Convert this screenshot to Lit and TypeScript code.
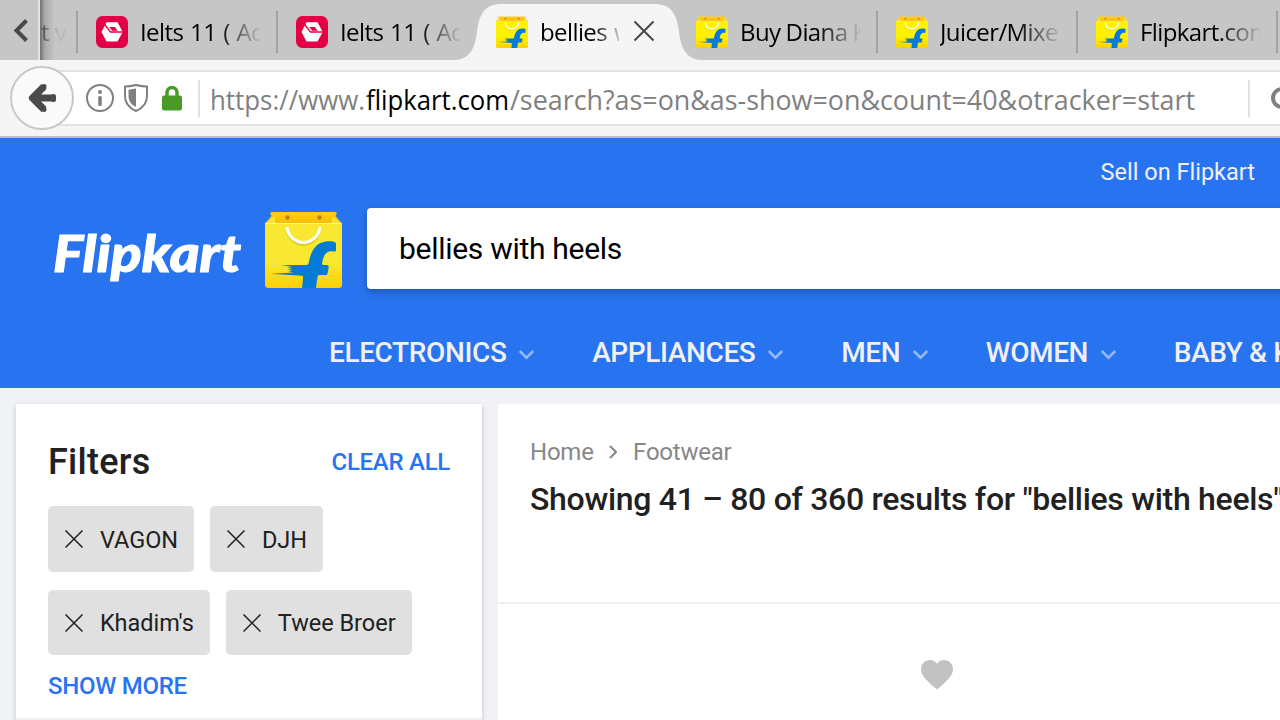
import { LitElement, html, css } from "lit";
import { customElement, property } from "lit/decorators.js";

@customElement("bag-icon")
class BagIcon extends LitElement {
  @property({ type: Boolean }) vivid = false;
  static styles = css`
    :host { display: block; flex: none; }
    svg { display: block; width: 100%; height: 100%; }
  `;
  render() {
    const body = this.vivid ? "#fff200" : "#f8e831";
    const flap = this.vivid ? "#fdb913" : "#fcb908";
    return html`<svg viewBox="0 0 77 77">
      <defs>
        <linearGradient id="b" x1="0" y1="0" x2="0" y2="1">
          <stop offset="0" stop-color=${body} /><stop offset=".6" stop-color=${body} /><stop offset="1" stop-color="#fdcf05" />
        </linearGradient>
        <linearGradient id="t" x1="0" y1="0" x2="0" y2="1">
          <stop offset="0" stop-color="#fdd205" /><stop offset="1" stop-color=${flap} />
        </linearGradient>
      </defs>
      <path d="M0 12h77V73.500q0 3.500-3.500 3.500h-70Q0 77 0 73.500z" fill="url(#b)" />
      <path d="M7 1h63q1.800 0 1.800 1.500L70.500 5 77 12.500H0L6.500 5 5.200 2.500Q5.200 1 7 1z" fill="url(#t)" />
      <path d="M0 12.500L9.500 5l1 7.500zM77 12.500L67.500 5l-1 7.500z" fill="#fae030" />
      <path d="M0 12.500h77" stroke="#fff3a0" stroke-width="1.200" />
      <circle cx="22.500" cy="6.500" r="2.200" fill="#b38600" /><circle cx="54.500" cy="6.500" r="2.200" fill="#b38600" />
      <path d="M22 18c1 9 8 15.500 16.500 15.500S54 27 55 18" fill="none" stroke="#c9b512" stroke-width="2.500" opacity=".6" />
      <path d="M22 16c1 9 8 15.500 16.500 15.500S54 25 55 16" fill="none" stroke="#fff" stroke-width="3" />
      <path d="M71 39.500V33q0-1.700-2-2.300C55 28.500 46.500 35 43.700 52q-.4 2-2.200 2H16l11 1.600-5.500.4 6 1.200-5 .8 5 1.300-4.500.7 5 1.600L6 62.800l31 2q1.300.2 1.100 2.200L37 77h14l1.600-11.500q.2-1.500 1.400-1.500h7q1.200 0 1.500-1.500l1.200-6q.3-2.500-2-2.500h-3.200q-1.700 0-1.400-1.800C58.300 44.500 61 39 69 40.500q2 .3 2-1z" fill="#047bd5" />
    </svg>`;
  }
}

@customElement("browser-tab")
class BrowserTab extends LitElement {
  @property() label = "";
  @property() icon = "bag";
  @property({ type: Boolean, reflect: true }) active = false;
  @property({ type: Boolean, reflect: true }) plain = false;
  static styles = css`
    :host { display: flex; position: relative; box-sizing: border-box; flex: none; width: 200px; height: 60px; padding: 4px 0 0 20px; align-items: center; gap: 12px; }
    .sep { position: absolute; left: 0; top: 11px; width: 2px; height: 42px; background: #a2a2a2; }
    .shape { position: absolute; left: -21px; top: 4px; width: 246px; height: 56px; }
    .icon { position: relative; width: 32px; height: 32px; flex: none; }
    .label { position: relative; width: 120px; height: 36px; overflow: hidden; white-space: nowrap; font: 24px/35px "Open Sans", "Noto Sans", sans-serif; letter-spacing: -0.6px; word-spacing: 1.200px; color: #000;
      -webkit-mask-image: linear-gradient(90deg, #000 78px, transparent 122px); mask-image: linear-gradient(90deg, #000 78px, transparent 122px); }
    :host([active]) .label { width: 79px; -webkit-mask-image: linear-gradient(90deg, #000 54px, transparent 86px); mask-image: linear-gradient(90deg, #000 54px, transparent 86px); }
    :host([plain]) .label { word-spacing: -.5px; }
    .close { position: relative; width: 22px; height: 22px; margin-top: -2px; margin-left: 2px; flex: none; }
  `;
  render() {
    return html`
      ${this.active
        ? html`<svg class="shape" viewBox="0 0 246 56"><path d="M0 56C15 55 20 44 22 28C24 10 30 0 47 0H199C216 0 222 10 224 28C226 44 231 55 246 56z" fill="#f5f5f5" /></svg>`
        : this.plain ? "" : html`<div class="sep"></div>`}
      ${this.icon === "bag"
        ? html`<bag-icon class="icon" vivid></bag-icon>`
        : html`<svg class="icon" viewBox="0 0 32 32">
            <rect width="32" height="32" rx="6.500" fill="#e40046" />
            <path d="M10.500 6.300h11L26.800 16l-5.300 9.500h-11L5.500 16z" fill="#fff" />
            <path d="M8 7.500l6.500 8.600H28" fill="none" stroke="#e40046" stroke-width="1.500" />
            <path d="M13.300 11h5.600l2.800 3.700h-5.600z" fill="#e40046" />
          </svg>`}
      <div class="label">${this.label}</div>
      ${this.active ? html`<svg class="close" viewBox="0 0 22 22"><path d="M1.500 1.500l19 19M20.500 1.500l-19 19" stroke="#484848" stroke-width="2" /></svg>` : ""}
    `;
  }
}

@customElement("app-root")
class AppRoot extends LitElement {
  static styles = css`
    :host { display: flex; flex-direction: column; width: 1280px; height: 720px; overflow: hidden; background: #f1f2f6; font-family: Roboto, sans-serif; color: #212121; }
    svg { display: block; flex: none; }
    .tabs { display: flex; height: 60px; flex: none; background: #c6c6c6; overflow: hidden; }
    .scroll { flex: none; border-right: 2px solid #e4e4e4; display: flex; align-items: center; padding: 2px 0 0 12px; width: 26px; height: 58px; }
    .prev { width: 36px; flex: none; height: 60px; background: linear-gradient(90deg, #707070, #aaa 5px, #c6c6c6 15px); font: 24px/64px "Open Sans", sans-serif; letter-spacing: -0.5px; white-space: nowrap; overflow: hidden; }
    .prev span { padding-left: 1px; background: linear-gradient(90deg, #444, #b8b8b8 18px); -webkit-background-clip: text; background-clip: text; color: transparent; }
    .toolbar { flex: none; background: #f5f5f5; border-bottom: 2px solid #b9bcc2; display: flex; padding: 6px 0 0 10px; height: 70px; align-items: flex-start; }
    .back { width: 60px; height: 60px; flex: none; border: 2px solid #c8c8c8; border-radius: 50%; background: #fafafa; display: grid; place-items: center; z-index: 1; }
    .url { margin: 4px 0 0 -20px; padding-left: 32px; box-sizing: border-box; height: 56px; width: 1230px; flex: none; background: #fff; border: solid #e2e2e2; border-width: 2px 0; display: flex; align-items: center; }
    .line { width: 2px; height: 37px; background: #e1e1e1; flex: none; }
    .divider { margin-left: 14px; }
    .address { margin-left: 10px; font-family: "Open Sans", "Noto Sans", sans-serif; font-size: 27.500px; }
    header { height: 250px; flex: none; background: #2874f0; color: #f0f0f0; display: flex; flex-direction: column; }
    .sell { height: 70px; flex: none; line-height: 68px; text-align: right; padding-right: 25px; font-size: 23.500px; }
    .brand { display: flex; height: 81px; flex: none; padding-left: 52px; }
    .wordmark { font: italic 900 51px Lato, sans-serif; }
    .bag { width: 77px; height: 77px; margin: 3px 25px 0 21px; }
    .search { width: 940px; flex: none; height: 81px; box-sizing: border-box; background: #fff; border-radius: 4px; box-shadow: 0 3px 7px rgba(0,0,0,.28); color: #000; font-size: 30px; letter-spacing: -.29px; line-height: 81px; padding-left: 32px; }
    nav { display: flex; padding: 44px 0 0 329px; gap: 56.700px; font-size: 28px; letter-spacing: -.38px; font-weight: 500; line-height: 40px; white-space: nowrap; }
    .item { display: flex; align-items: center; gap: 12px; flex: none; }
    .item svg { margin-top: 2px; }
    .content { display: flex; padding: 16px 0 0 16px; gap: 16px; height: 332px; flex: none; box-sizing: border-box; }
    aside { width: 466px; flex: none; background: #fff; box-shadow: 0 2px 5px rgba(0,0,0,.2); }
    .filters { height: 314px; border-bottom: 2px solid #f0f0f0; padding: 0 32px; }
    .head { display: flex; justify-content: space-between; align-items: center; height: 102px; padding-top: 14px; box-sizing: border-box; }
    .title { font-size: 36px; font-weight: 500; letter-spacing: .25px; }
    .link { font-size: 24px; font-weight: 500; color: #2874f0; letter-spacing: -.28px; }
    .chips { display: flex; flex-wrap: wrap; gap: 18px 16px; }
    .chip { display: flex; height: 66px; line-height: 68px; align-items: center; padding: 0 16px 0 17px; gap: 16.900px; border-radius: 5px; background: #e0e0e0; font-size: 23.500px; letter-spacing: -.02px; white-space: nowrap; }
    .chip span { padding-top: 1px; }
    .chip.low { height: 65px; }
    .more { line-height: 28px; margin-top: 17px; }
    main { flex: 1; min-width: 0; background: #fff; white-space: nowrap; overflow: hidden; }
    .results { height: 198px; border-bottom: 2px solid #f0f0f0; padding: 0 32px; }
    .crumbs { display: flex; align-items: center; padding-top: 33px; height: 30px; color: #878787; font-size: 24px; letter-spacing: -.22px; }
    .crumbs svg { margin: 0 15.700px; }
    .count { margin-top: 12px; font-size: 32px; letter-spacing: -.29px; font-weight: 500; line-height: 40px; }
    .heart { margin: 56px 0 0 423px; }
  `;

  cross() {
    return html`<svg width="18" height="18" viewBox="0 0 18 18"><path d="M.5.500l17 17M17.500.500l-17 17" stroke="#212121" stroke-width="1.500" /></svg>`;
  }

  chip(name: string, low = false) {
    return html`<div class="chip ${low ? "low" : ""}">${this.cross()}<span>${name}</span></div>`;
  }

  render() {
    return html`
      <div class="tabs">
        <div class="scroll"><svg width="17" height="26" viewBox="0 0 17 26"><path d="M14.500 2.500L4.500 12.500l10 10" fill="none" stroke="#484848" stroke-width="4" /></svg></div>
        <div class="prev"><span>t v</span></div>
        <browser-tab icon="cube" label="Ielts 11 ( Academic"></browser-tab>
        <browser-tab icon="cube" label="Ielts 11 ( Academic"></browser-tab>
        <browser-tab active label="bellies with"></browser-tab>
        <browser-tab plain label="Buy Diana Korr"></browser-tab>
        <browser-tab label="Juicer/Mixer"></browser-tab>
        <browser-tab label="Flipkart.com"></browser-tab>
        <browser-tab label=""></browser-tab>
      </div>
      <div class="toolbar">
        <div class="back"><svg width="30" height="32" viewBox="0 0 30 32"><path d="M17 4.500L5.500 16 17 27.500M6 16h21" fill="none" stroke="#4a4a4a" stroke-width="7.200" stroke-linejoin="round" /><path d="M17 4.500v.01M17 27.500v.01M26.500 14.500v3" stroke="#4a4a4a" stroke-width="5" stroke-linecap="round" /></svg></div>
        <div class="url">
          <svg width="28" height="28" viewBox="0 0 28 28"><circle cx="14" cy="14" r="13" fill="none" stroke="#808080" stroke-width="2" /><circle cx="14" cy="8" r="2" fill="#808080" /><rect x="12.200" y="12" width="3.600" height="10" rx="1.500" fill="#808080" /></svg>
          <svg width="44" height="28" viewBox="-10 0 44 28"><path d="M12 1Q18 2.500 23 2.500V12c0 8-4 12-11 15C5 24 1 20 1 12V2.500Q6 2.500 12 1z" fill="none" stroke="#808080" stroke-width="2" /><path d="M12 4.500V23C7 20.500 4.500 17 4.500 12V5.700z" fill="#808080" /></svg>
          <svg width="26" height="28" viewBox="-4 0 26 28"><path d="M5 12V8.500a5 5 0 0 1 10 0V12" fill="none" stroke="#4a9a27" stroke-width="3.500" /><rect x="0" y="11.500" width="20" height="15" rx="2" fill="#4a9a27" /></svg>
          <div class="line divider"></div>
          <svg class="address" width="1038" height="52" viewBox="0 0 1038 52">
            <text x="0" y="38" fill="#808080" textLength="155" lengthAdjust="spacingAndGlyphs">https://www.</text>
            <text x="156" y="38" fill="#000" textLength="143" lengthAdjust="spacingAndGlyphs">flipkart.com</text>
            <text x="300" y="38" fill="#808080" textLength="685" lengthAdjust="spacingAndGlyphs">/search?as=on&amp;as-show=on&amp;count=40&amp;otracker=start</text>
          </svg>
          <div class="line"></div>
          <svg width="42" height="26" viewBox="-20 0 42 26"><circle cx="12" cy="13" r="9" fill="none" stroke="#808080" stroke-width="4" /></svg>
        </div>
      </div>
      <header>
        <div class="sell">Sell on Flipkart</div>
        <div class="brand">
          <svg class="wordmark" width="192" height="81" viewBox="0 0 192 81"><text x="1" y="63.500" fill="#fff" stroke="#fff" stroke-width="1" stroke-linejoin="round" textLength="188" lengthAdjust="spacingAndGlyphs">Flipkart</text></svg>
          <bag-icon class="bag"></bag-icon>
          <div class="search">bellies with heels</div>
        </div>
        <nav>
          ${["ELECTRONICS", "APPLIANCES", "MEN", "WOMEN", "BABY & KIDS"].map(
            (n) => html`<div class="item"><span>${n}</span><svg width="17" height="11" viewBox="0 0 17 11"><path d="M1.800 2l6.700 6.700L15.200 2" fill="none" stroke="#93b9f8" stroke-width="2.500" /></svg></div>`
          )}
        </nav>
      </header>
      <div class="content">
        <aside>
          <div class="filters">
            <div class="head"><span class="title">Filters</span><span class="link">CLEAR ALL</span></div>
            <div class="chips">
              ${this.chip("VAGON")}${this.chip("DJH")}${this.chip("Khadim's", true)}${this.chip("Twee Broer", true)}
            </div>
            <div class="link more">SHOW MORE</div>
          </div>
        </aside>
        <main>
          <div class="results">
            <div class="crumbs">Home<svg width="8" height="14" viewBox="0 0 8 14"><path d="M1 1l6 6-6 6" fill="none" stroke="#878787" stroke-width="2" /></svg>Footwear</div>
            <div class="count">Showing 41 – 80 of 360 results for "bellies with heels"</div>
          </div>
          <svg class="heart" width="32" height="30" viewBox="0 0 32 30"><path d="M16 29.500C6 21 0 16 0 9 0 4 4 0 9 0c3 0 5.500 1.500 7 4 1.500-2.500 4-4 7-4 5 0 9 4 9 9 0 7-6 12-16 20.500z" fill="#c2c2c2" /></svg>
        </main>
      </div>
    `;
  }
}
